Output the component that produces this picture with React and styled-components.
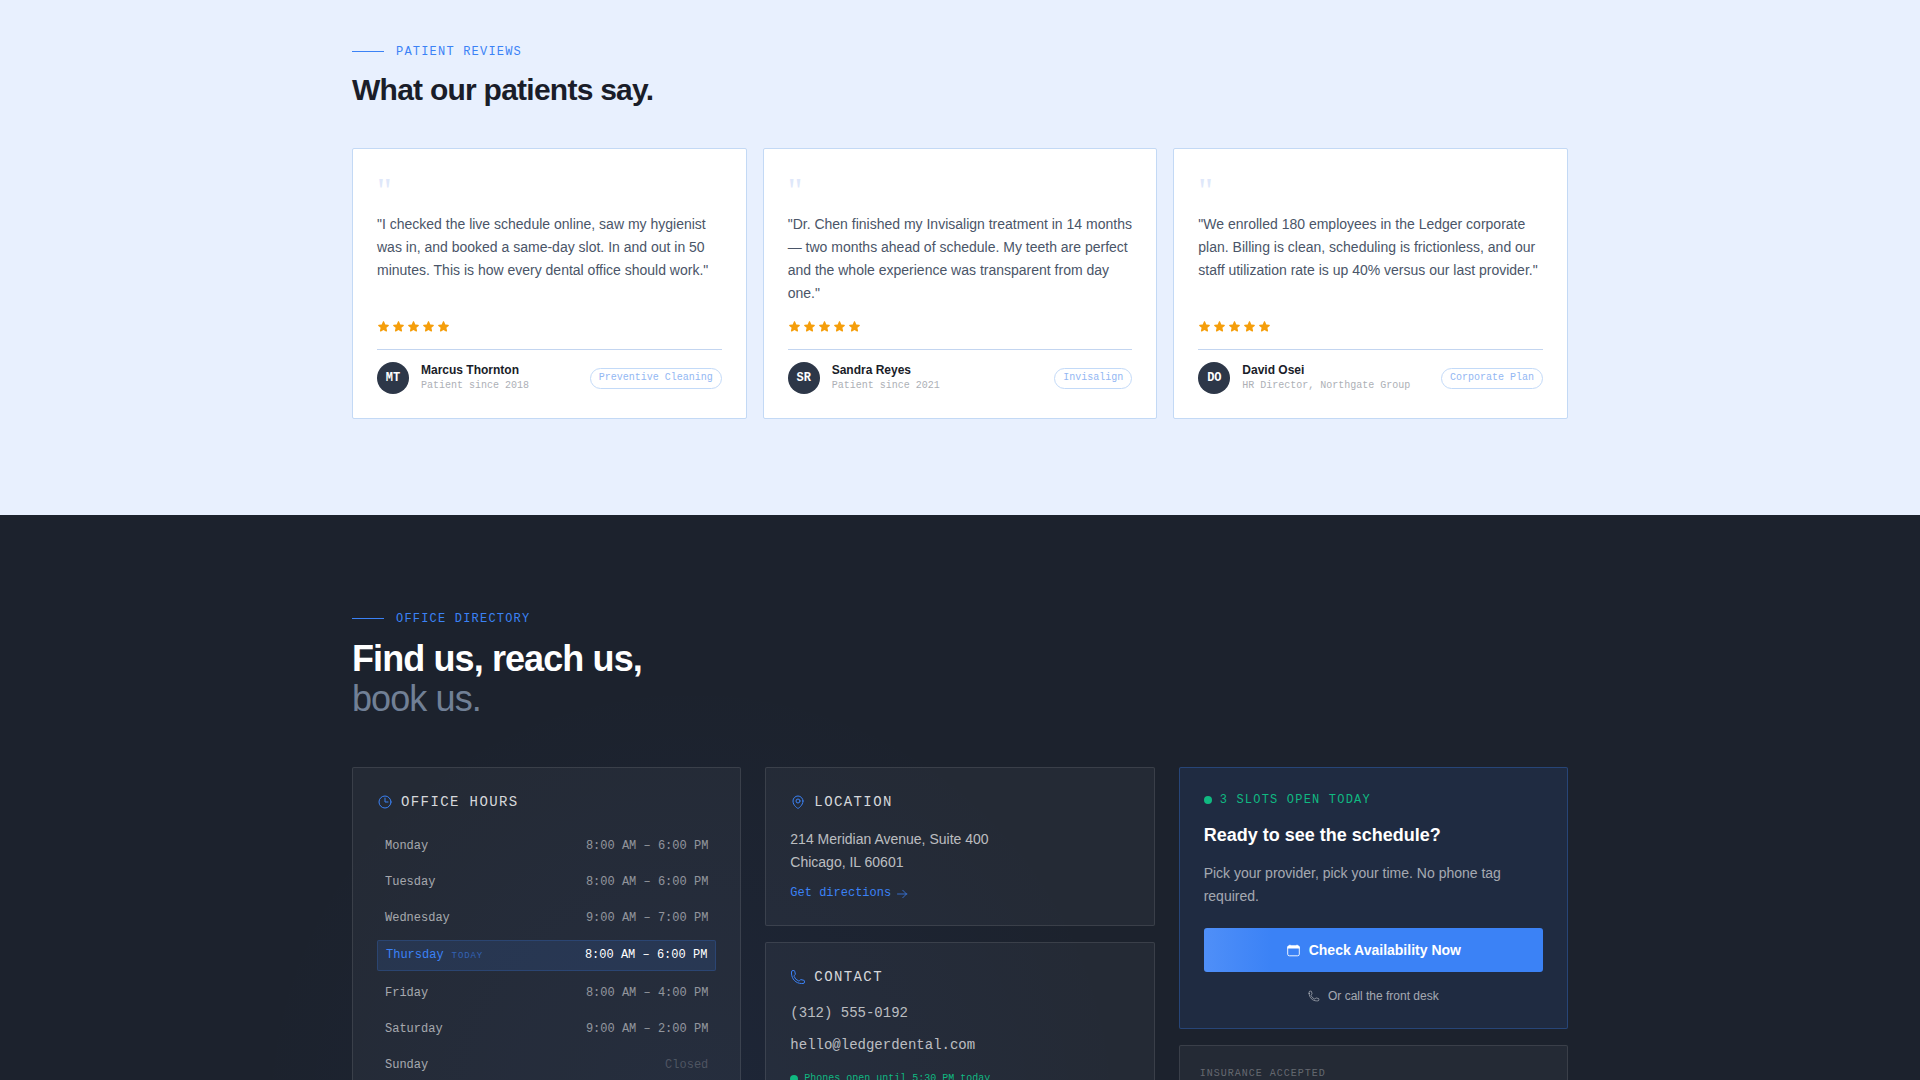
import React from "react";
import styled, { createGlobalStyle, css } from "styled-components";
import {
  HiOutlineArrowRight,
  HiOutlineClock,
  HiOutlineMapPin,
  HiOutlinePhone,
  HiStar,
} from "react-icons/hi2";

const sans = '"Liberation Sans", Arial, sans-serif';
const mono = '"Liberation Mono", "Courier New", monospace';

const GlobalStyle = createGlobalStyle`
  * {
    box-sizing: border-box;
  }
  body {
    margin: 0;
    background: #1c222d;
    font-family: ${sans};
  }
  h2, h3, p, blockquote {
    margin: 0;
  }
  a {
    text-decoration: none;
  }
`;

const Container = styled.div`
  max-width: 1280px;
  margin: 0 auto;
  padding: 0 32px;
`;

const ReviewsSection = styled.section`
  padding: 44px 0 96px;
  background: #e8f0fe;
`;

const DirectorySection = styled.section`
  padding: 96px 0;
  background:
    radial-gradient(circle at 36% 600px, rgba(59, 110, 246, 0.05), transparent 440px),
    #1c222d;
`;

const Eyebrow = styled.div`
  display: flex;
  align-items: center;
  gap: 12px;
  margin-bottom: 12px;
  color: #3b82f6;
  font: 12px/16px ${mono};
  letter-spacing: 0.1em;
  text-transform: uppercase;
  &::before {
    content: "";
    width: 32px;
    height: 1px;
    margin-bottom: 1px;
    background: #3b82f6;
  }
`;

const SectionTitle = styled.h2`
  margin-bottom: ${({ $large }) => ($large ? "48px" : "40px")};
  color: ${({ $large }) => ($large ? "#ffffff" : "#1a1d29")};
  font-size: ${({ $large }) => ($large ? "36px" : "30px")};
  line-height: ${({ $large }) => ($large ? "40px" : "36px")};
  letter-spacing: -0.025em;
  span {
    display: block;
    color: #718096;
    font-weight: 400;
  }
`;

const Columns = styled.div`
  display: grid;
  grid-template-columns: repeat(3, 1fr);
  gap: ${({ $gap }) => $gap};
  @media only screen and (max-width: 900px) {
    grid-template-columns: 1fr;
  }
`;

const ReviewCard = styled.article`
  display: flex;
  flex-direction: column;
  padding: 24px;
  background: #ffffff;
  border: 1px solid #c3d9f5;
  border-radius: 2px;
`;

const QuoteMark = styled.div`
  margin-bottom: 4px;
  color: #dfe8fa;
  font: 36px/36px "Liberation Serif", serif;
`;

const Quote = styled.blockquote`
  flex: 1;
  margin-bottom: 15px;
  color: #4a5568;
  font-size: 14px;
  line-height: 23px;
`;

const Stars = styled.div`
  display: flex;
  gap: 2px;
  margin-bottom: 16px;
  color: #f59e0b;
  svg {
    display: block;
  }
`;

const ReviewFooter = styled.footer`
  display: flex;
  align-items: center;
  gap: 12px;
  padding-top: 12px;
  border-top: 1px solid #c3d5f0;
`;

const Avatar = styled.div`
  display: flex;
  align-items: center;
  justify-content: center;
  width: 32px;
  height: 32px;
  border-radius: 50%;
  background: #2d3748;
  color: #ffffff;
  font: bold 12px/16px ${mono};
`;

const Reviewer = styled.div`
  flex: 1;
  color: #1a1d29;
  font-size: 12px;
  line-height: 16px;
  font-weight: bold;
  small {
    display: block;
    color: #adb0b6;
    font: 10px/16px ${mono};
  }
`;

const Tag = styled.span`
  padding: 2px 8px 3px;
  border: 1px solid #c3daf8;
  border-radius: 11px;
  color: #93b7f3;
  font: 10px/14px ${mono};
`;

const Stack = styled.div`
  display: flex;
  flex-direction: column;
  gap: 16px;
`;

const Panel = styled.div`
  padding: ${({ $compact }) => ($compact ? "20px" : "24px")};
  background: rgba(255, 255, 255, 0.04);
  border: 1px solid rgba(255, 255, 255, 0.1);
  border-radius: 2px;
  ${({ $accent }) =>
    $accent &&
    css`
      background: rgba(59, 130, 246, 0.1);
      border-color: rgba(59, 130, 246, 0.3);
    `}
`;

const PanelTitle = styled.h3`
  display: flex;
  align-items: center;
  gap: 8px;
  margin-bottom: ${({ $space }) => $space || "16px"};
  color: #d6d8db;
  font: 14px/20px ${mono};
  letter-spacing: 0.1em;
  text-transform: uppercase;
  svg {
    color: #3b82f6;
  }
`;

const HoursTable = styled.table`
  display: block;
  font: 12px/16px ${mono};
  tbody {
    display: flex;
    flex-direction: column;
    gap: 8px;
  }
  th, td {
    padding: 0;
    font-weight: 400;
  }
`;

const HoursRow = styled.tr`
  display: flex;
  align-items: center;
  justify-content: space-between;
  padding: 6px 8px;
  color: rgba(255, 255, 255, 0.6);
  td {
    color: ${({ $closed }) => ($closed ? "rgba(255, 255, 255, 0.2)" : "rgba(255, 255, 255, 0.5)")};
  }
  ${({ $today }) =>
    $today &&
    css`
      padding: 6px 8px 7px;
      background: rgba(59, 130, 246, 0.13);
      border: 1px solid rgba(59, 130, 246, 0.2);
      border-radius: 2px;
      color: #3b82f6;
      td {
        color: #ffffff;
      }
    `}
`;

const TodayMark = styled.span`
  margin-left: 8px;
  color: rgba(59, 130, 246, 0.6);
  font-size: 9px;
  line-height: 12px;
  letter-spacing: 0.1em;
`;

const Address = styled.p`
  margin-bottom: 12px;
  color: rgba(255, 255, 255, 0.7);
  font-size: 14px;
  line-height: 23px;
`;

const DirectionsLink = styled.a`
  display: flex;
  align-items: center;
  gap: 5px;
  color: #3b82f6;
  font: 12px/15px ${mono};
`;

const ContactLink = styled.a`
  display: block;
  margin-bottom: ${({ $last }) => ($last ? "16px" : "12px")};
  color: rgba(255, 255, 255, 0.7);
  font: 14px/20px ${mono};
`;

const Status = styled.div`
  display: flex;
  align-items: center;
  gap: ${({ $large }) => ($large ? "8px" : "6px")};
  color: #10b981;
  font: 10px/15px ${mono};
  ${({ $large }) =>
    $large &&
    css`
      margin-bottom: 12px;
      font-size: 12px;
      line-height: 16px;
      letter-spacing: 0.1em;
      text-transform: uppercase;
    `}
  &::before {
    content: "";
    width: 8px;
    height: 8px;
    border-radius: 50%;
    background: #10b981;
  }
`;

const BookingTitle = styled.h3`
  margin-bottom: 12px;
  color: #ffffff;
  font-size: 18px;
  line-height: 30px;
`;

const BookingText = styled.p`
  margin-bottom: 20px;
  color: rgba(255, 255, 255, 0.6);
  font-size: 14px;
  line-height: 23px;
`;

const BookButton = styled.button`
  display: flex;
  align-items: center;
  justify-content: center;
  gap: 8px;
  width: 100%;
  margin-bottom: 16px;
  padding: 12px;
  border: 0;
  border-radius: 3px;
  background: linear-gradient(90deg, #4f8ff8, #3b82f6 20%);
  color: #ffffff;
  font: bold 14px/20px ${sans};
  cursor: pointer;
`;

const CallLink = styled.a`
  display: flex;
  align-items: center;
  justify-content: center;
  gap: 8px;
  color: rgba(255, 255, 255, 0.6);
  font-size: 12px;
  line-height: 16px;
`;

const InsuranceLabel = styled.div`
  color: rgba(255, 255, 255, 0.3);
  font: 10px/15px ${mono};
  letter-spacing: 0.1em;
  text-transform: uppercase;
`;

const reviews = [
  {
    initials: "MT",
    name: "Marcus Thornton",
    detail: "Patient since 2018",
    tag: "Preventive Cleaning",
    text: "I checked the live schedule online, saw my hygienist was in, and booked a same-day slot. In and out in 50 minutes. This is how every dental office should work.",
  },
  {
    initials: "SR",
    name: "Sandra Reyes",
    detail: "Patient since 2021",
    tag: "Invisalign",
    text: "Dr. Chen finished my Invisalign treatment in 14 months — two months ahead of schedule. My teeth are perfect and the whole experience was transparent from day one.",
  },
  {
    initials: "DO",
    name: "David Osei",
    detail: "HR Director, Northgate Group",
    tag: "Corporate Plan",
    text: "We enrolled 180 employees in the Ledger corporate plan. Billing is clean, scheduling is frictionless, and our staff utilization rate is up 40% versus our last provider.",
  },
];

const hours = [
  { day: "Monday", time: "8:00 AM – 6:00 PM" },
  { day: "Tuesday", time: "8:00 AM – 6:00 PM" },
  { day: "Wednesday", time: "9:00 AM – 7:00 PM" },
  { day: "Thursday", time: "8:00 AM – 6:00 PM", today: true },
  { day: "Friday", time: "8:00 AM – 4:00 PM" },
  { day: "Saturday", time: "9:00 AM – 2:00 PM" },
  { day: "Sunday", time: "Closed", closed: true },
];

const CalendarIcon = () => (
  <svg width="15" height="15" viewBox="0 0 15 15" fill="none" aria-hidden="true">
    <rect x="1.7" y="3" width="11.6" height="9.8" rx="1.6" stroke="currentColor" strokeWidth="0.9" />
    <path
      d="M1.3 5.6V4.2A1.7 1.7 0 0 1 3 2.5h.4V1.8h1.1v.7h6v-.7h1.1v.7h.4a1.7 1.7 0 0 1 1.7 1.7v1.4z"
      fill="currentColor"
    />
  </svg>
);

const Review = ({ review: { initials, name, detail, tag, text } }) => (
  <ReviewCard>
    <QuoteMark aria-hidden="true">"</QuoteMark>
    <Quote>"{text}"</Quote>
    <Stars role="img" aria-label="5 out of 5 stars">
      {[1, 2, 3, 4, 5].map(n => <HiStar key={n} size={13} />)}
    </Stars>
    <ReviewFooter>
      <Avatar>{initials}</Avatar>
      <Reviewer>
        {name}
        <small>{detail}</small>
      </Reviewer>
      <Tag>{tag}</Tag>
    </ReviewFooter>
  </ReviewCard>
);

const OfficeHours = () => (
  <Panel>
    <PanelTitle $space="20px"><HiOutlineClock size={16} />Office Hours</PanelTitle>
    <HoursTable>
      <tbody>
        {hours.map(({ day, time, today, closed }) => (
          <HoursRow key={day} $today={today} $closed={closed}>
            <th scope="row">
              {day}
              {today ? <TodayMark>TODAY</TodayMark> : null}
            </th>
            <td>{time}</td>
          </HoursRow>
        ))}
      </tbody>
    </HoursTable>
  </Panel>
);

export default () => (
  <>
    <GlobalStyle />
    <ReviewsSection>
      <Container>
        <Eyebrow>Patient Reviews</Eyebrow>
        <SectionTitle>What our patients say.</SectionTitle>
        <Columns $gap="16px">
          {reviews.map(review => <Review key={review.initials} review={review} />)}
        </Columns>
      </Container>
    </ReviewsSection>
    <DirectorySection>
      <Container>
        <Eyebrow>Office Directory</Eyebrow>
        <SectionTitle $large>
          Find us, reach us,
          <span>book us.</span>
        </SectionTitle>
        <Columns $gap="24px">
          <OfficeHours />
          <Stack>
            <Panel>
              <PanelTitle><HiOutlineMapPin size={16} />Location</PanelTitle>
              <Address>
                214 Meridian Avenue, Suite 400
                <br />
                Chicago, IL 60601
              </Address>
              <DirectionsLink href="#directions">
                Get directions
                <HiOutlineArrowRight size={12} />
              </DirectionsLink>
            </Panel>
            <Panel>
              <PanelTitle><HiOutlinePhone size={16} />Contact</PanelTitle>
              <ContactLink href="tel:+13125550192">(312) 555-0192</ContactLink>
              <ContactLink $last href="mailto:hello@ledgerdental.com">hello@ledgerdental.com</ContactLink>
              <Status>Phones open until 5:30 PM today</Status>
            </Panel>
          </Stack>
          <Stack>
            <Panel $accent>
              <Status $large>3 slots open today</Status>
              <BookingTitle>Ready to see the schedule?</BookingTitle>
              <BookingText>Pick your provider, pick your time. No phone tag required.</BookingText>
              <BookButton type="button">
                <CalendarIcon />
                Check Availability Now
              </BookButton>
              <CallLink href="tel:+13125550192">
                <HiOutlinePhone size={12} />
                Or call the front desk
              </CallLink>
            </Panel>
            <Panel $compact>
              <InsuranceLabel>Insurance accepted</InsuranceLabel>
            </Panel>
          </Stack>
        </Columns>
      </Container>
    </DirectorySection>
  </>
);
